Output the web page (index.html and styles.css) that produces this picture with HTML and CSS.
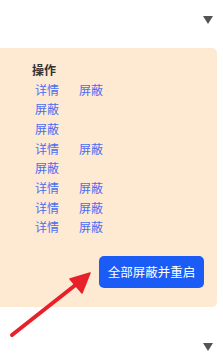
FILE: index.html
```html
<!DOCTYPE html>
<html lang="zh">
<head>
<meta charset="utf-8">
<link rel="stylesheet" href="styles.css">
</head>
<body>
<div class="page">
  <div class="bar"><span class="caret"></span></div>
  <div class="panel">
    <div class="ops">
      <div class="head">操作</div>
      <div class="row"><a class="lnk">详情</a><a class="lnk">屏蔽</a></div>
      <div class="row"><a class="lnk">屏蔽</a></div>
      <div class="row"><a class="lnk">屏蔽</a></div>
      <div class="row"><a class="lnk">详情</a><a class="lnk">屏蔽</a></div>
      <div class="row"><a class="lnk">屏蔽</a></div>
      <div class="row"><a class="lnk">详情</a><a class="lnk">屏蔽</a></div>
      <div class="row"><a class="lnk">详情</a><a class="lnk">屏蔽</a></div>
      <div class="row"><a class="lnk">详情</a><a class="lnk">屏蔽</a></div>
    </div>
    <div class="actions"><button class="btn">全部屏蔽并重启</button></div>
  </div>
  <div class="bar bar-bottom"><span class="caret"></span></div>
  <svg class="arrow" width="223" height="353" viewBox="0 0 223 353">
    <line x1="12" y1="335" x2="78" y2="283" stroke="#e8202a" stroke-width="4" stroke-linecap="round"/>
    <polygon points="90,273 70,279 82,293" fill="#e8202a" stroke="#e8202a" stroke-width="1.5" stroke-linejoin="round"/>
  </svg>
</div>
</body>
</html>
```
FILE: styles.css
```css
html, body {
  margin: 0;
  padding: 0;
  background: #ffffff;
}
body {
  font-family: "Noto Sans CJK SC", "Noto Sans", sans-serif;
  width: 223px;
  height: 353px;
  overflow: hidden;
}
.page {
  position: relative;
  width: 223px;
  height: 353px;
}
.bar {
  height: 48px;
  display: flex;
  justify-content: flex-end;
  align-items: flex-start;
  padding-right: 10px;
  box-sizing: border-box;
}
.caret {
  display: block;
  width: 0;
  height: 0;
  margin-top: 16px;
  border-left: 5px solid transparent;
  border-right: 5px solid transparent;
  border-top: 8px solid #545454;
}
.bar-bottom .caret {
  margin-top: 36px;
}
.panel {
  width: 217px;
  height: 259px;
  background: #fee9d3;
  border-radius: 0 5px 5px 0;
  box-sizing: border-box;
  padding: 12px 13px 0 32px;
  display: flex;
  flex-direction: column;
}
.ops {
  font-size: 12px;
  line-height: 19.67px;
}
.head {
  font-weight: bold;
  color: #333333;
}
.row {
  display: flex;
  padding-left: 3px;
}
.lnk {
  color: #4a6ef2;
  width: 44px;
}
.actions {
  display: flex;
  justify-content: flex-end;
  margin-top: 19px;
}
.btn {
  font-family: "Noto Sans CJK SC", "Noto Sans", sans-serif;
  font-size: 12.5px;
  line-height: 18px;
  color: #ffffff;
  background: #1a5cf5;
  border: none;
  border-radius: 5px;
  height: 32px;
  width: 105px;
  padding: 0;
}
.arrow {
  position: absolute;
  left: 0;
  top: 0;
  pointer-events: none;
}
```
